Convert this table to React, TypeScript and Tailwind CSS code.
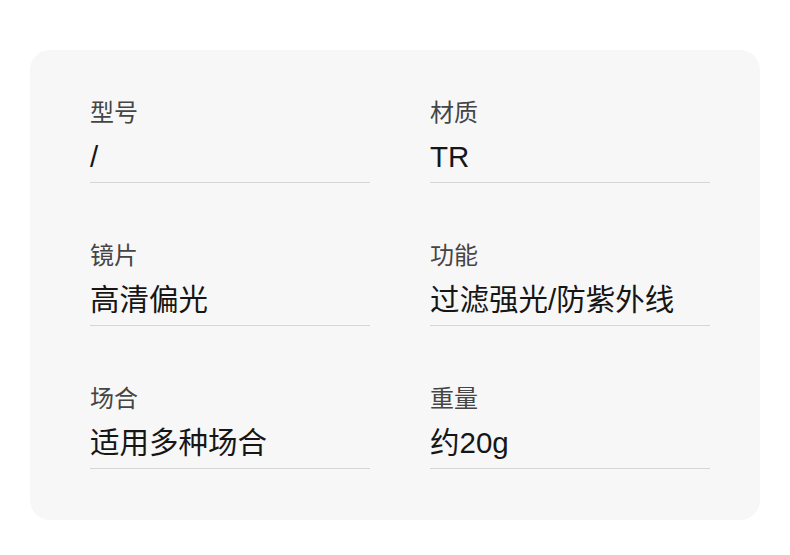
import React from 'react';

const specs: { label: string; value: string }[] = [
  { label: '型号', value: '/' },
  { label: '材质', value: 'TR' },
  { label: '镜片', value: '高清偏光' },
  { label: '功能', value: '过滤强光/防紫外线' },
  { label: '场合', value: '适用多种场合' },
  { label: '重量', value: '约20g' },
];

const SpecItem: React.FC<{ label: string; value: string }> = ({ label, value }) => (
  <div className="border-b border-[#d6d6d6] pb-[7px]">
    <div className="h-[30px] text-[24px] leading-[30px] text-[#454545]">{label}</div>
    <div className="mt-[11px] h-[36px] text-[29.5px] leading-[36px] text-[#161616]">{value}</div>
  </div>
);

const App: React.FC = () => {
  return (
    <div
      className="w-[790px] h-[555px] bg-white pt-[50px] pl-[30px]"
      style={{ fontFamily: '"Liberation Sans", "Noto Sans CJK SC", sans-serif' }}
    >
      <div className="w-[730px] h-[470px] rounded-[20px] bg-[#f7f7f7] pt-[48px] pl-[60px]">
        <div className="grid grid-cols-[280px_280px] gap-x-[60px] gap-y-[58px]">
          {specs.map((s) => (
            <SpecItem key={s.label} label={s.label} value={s.value} />
          ))}
        </div>
      </div>
    </div>
  );
};

export default App;
